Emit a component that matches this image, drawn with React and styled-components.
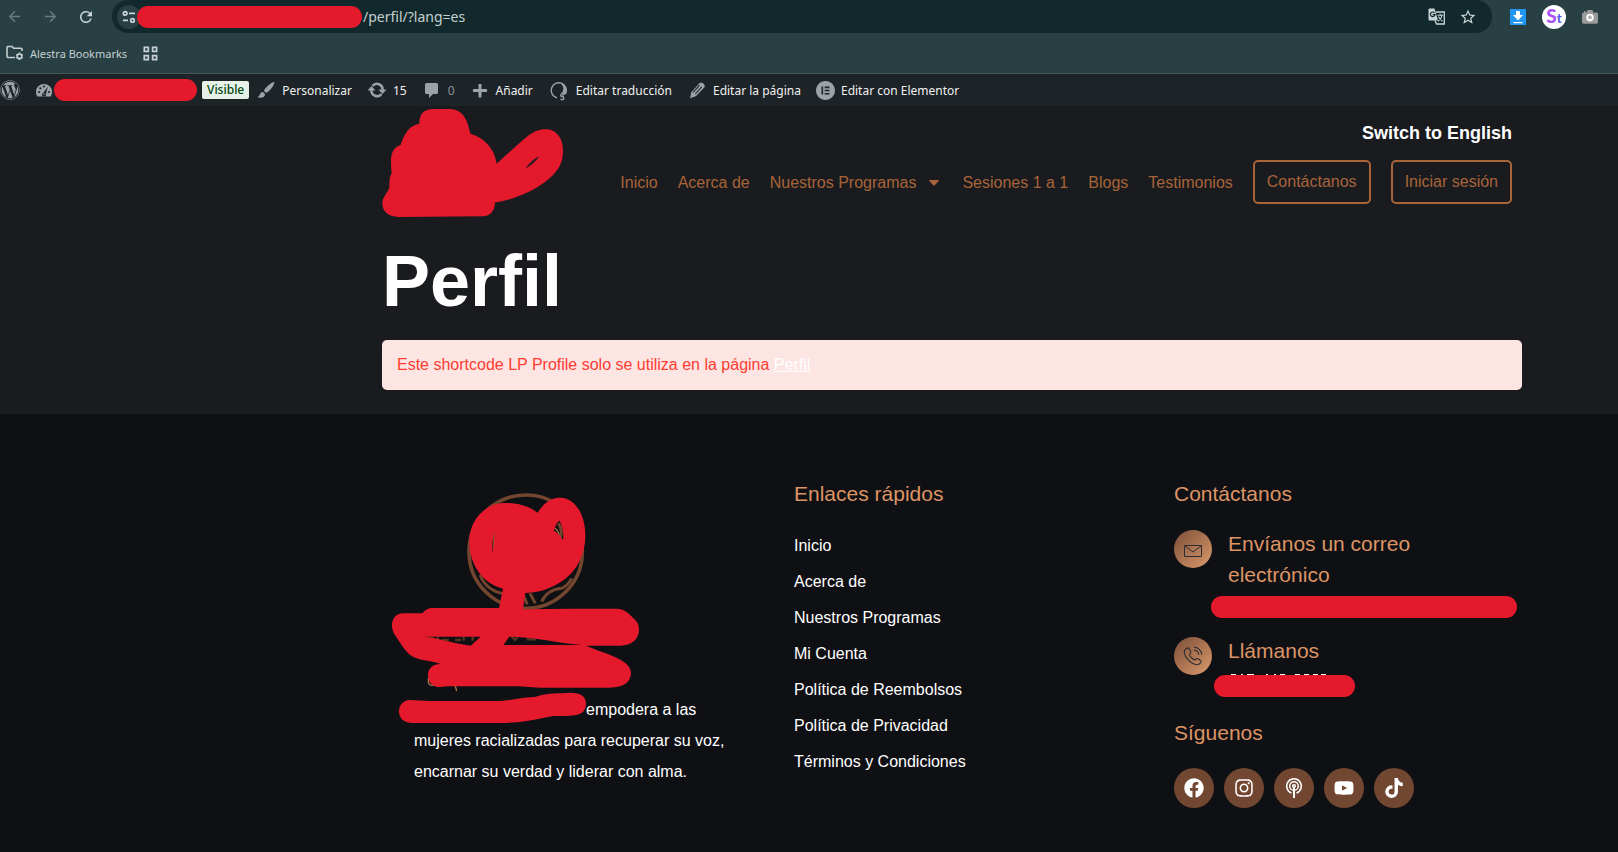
import React from "react";
import styled, { createGlobalStyle } from "styled-components";
import { FaWordpress, FaFacebook, FaInstagram, FaYoutube, FaTiktok } from "react-icons/fa";
import { FaElementor } from "react-icons/fa6";
import { MdStarBorder, MdArrowBack, MdArrowForward, MdRefresh } from "react-icons/md";

const RED = "#e4192c";

const GlobalStyle = createGlobalStyle`
  * { box-sizing: border-box; }
  html { background: #0f1014; }
  body { margin: 0; font-family: "Liberation Sans", Arial, sans-serif; font-size: 16px; color: #fff; }
  h1, h2, h3, p, ul { margin: 0; padding: 0; }
  ul { list-style: none; }
  a { color: inherit; text-decoration: none; }
  svg { display: block; flex: none; }
`;

const Redaction = styled.span`
  display: block;
  flex: none;
  width: ${(p) => p.$width}px;
  height: 22px;
  margin-left: ${(p) => (p.$overlap ? -4 : 0)}px;
  border-radius: 12px;
  background: ${RED};
`;

/* Browser chrome */
const Browser = styled.div`
  background: #283f44;
  border-bottom: 1px solid #46575a;
  font-family: "Noto Sans", "Open Sans", sans-serif;
  color: #c5d0d1;
`;
const Toolbar = styled.div`
  display: flex;
  align-items: center;
  height: 33px;
  padding-right: 16px;
`;
const NavButtons = styled.div`
  display: flex;
  gap: 12px;
  padding-left: 2px;
  margin-right: 14px;
`;
const IconButton = styled.button`
  display: flex;
  align-items: center;
  justify-content: center;
  flex: none;
  width: 24px;
  height: 24px;
  padding: 0;
  border: 0;
  border-radius: 50%;
  background: ${(p) => p.$bg || "transparent"};
  color: ${(p) => (p.$dim ? "#6b7c7f" : "#c9d5d6")};
`;
const AddressBar = styled.div`
  display: flex;
  align-items: center;
  flex: 1;
  height: 33px;
  padding: 0 12px 0 5px;
  border-radius: 16px;
  background: #11292c;
`;
const AddressInput = styled.input`
  flex: 1;
  min-width: 0;
  height: 24px;
  padding: 0 1px;
  border: 0;
  background: transparent;
  color: #c5cfd0;
  font-family: inherit;
  font-size: 14px;
`;
const AddressActions = styled.div`
  display: flex;
  gap: 8px;
`;
const Extensions = styled.div`
  display: flex;
  gap: 12px;
  margin-left: 14px;
`;
const Bookmarks = styled.div`
  display: flex;
  align-items: center;
  gap: 16px;
  height: 40px;
  padding: 0 6px;
`;
const Bookmark = styled.a`
  display: flex;
  align-items: center;
  gap: 6px;
  font-size: 11px;
`;

/* WordPress bar */
const AdminBar = styled.nav`
  display: flex;
  align-items: center;
  gap: 15px;
  height: 32px;
  background: #1d2327;
  color: #f0f0f1;
  font-family: "Noto Sans", "Open Sans", sans-serif;
  font-size: 12px;
  white-space: nowrap;
`;
const AdminItem = styled.a`
  display: flex;
  align-items: center;
  gap: 6px;
  color: ${(p) => (p.$muted ? "#8b9095" : "inherit")};
  svg { color: #9ca2a7; }
`;
const SiteGroup = styled.div`
  display: flex;
  align-items: center;
  gap: 1px;
  margin-right: -8px;
`;
const Badge = styled.span`
  margin-left: 4px;
  padding: 0 5px;
  border-radius: 2px;
  background: #e6f2e8;
  color: #00450c;
  font-weight: 500;
  line-height: 18px;
`;

/* Site */
const Container = styled.div`
  width: calc(100% - 96px);
  max-width: 1140px;
  margin-left: auto;
  margin-right: 96px;
`;
const Main = styled.main`
  padding-bottom: 24px;
  background: #1a1b1f;
`;
const SiteHeader = styled.header`
  display: flex;
  justify-content: space-between;
  padding-right: 10px;
`;
const HeaderRight = styled.div`
  display: flex;
  flex-direction: column;
  align-items: flex-end;
  padding-top: 16px;
`;
const LanguageLink = styled.a`
  font-size: 18px;
  line-height: 22px;
  font-weight: 700;
`;
const Menu = styled.nav`
  display: flex;
  align-items: center;
  gap: 20px;
  margin-top: 16px;
  color: #a86439;
  white-space: nowrap;
`;
const MenuLink = styled.a`
  display: flex;
  align-items: center;
  gap: 13px;
  padding-top: 2px;
  padding-right: ${(p) => (p.$caret ? 3 : 0)}px;
`;
const OutlineLink = styled.a`
  height: 44px;
  padding: 0 12px;
  border: 2px solid #a86439;
  border-radius: 5px;
  line-height: 39px;
`;
const Title = styled.h1`
  margin-top: 22px;
  font-size: 72px;
  line-height: 82px;
`;
const Notice = styled.div`
  margin-top: 18px;
  padding: 0 15px;
  border-radius: 5px;
  background: #fde5e4;
  color: #ff3b30;
  line-height: 50px;
  a { color: #fff; text-decoration: underline; }
`;
const Footer = styled.footer`
  padding: 64px 0 40px;
  background: #0f1014;
`;
const Columns = styled(Container)`
  display: grid;
  grid-template-columns: repeat(3, 1fr);
`;
const Column = styled.section`
  padding: 0 32px;
`;
const BrandColumn = styled.section`
  padding-top: 14px;
`;
const BrandText = styled.p`
  padding: 0 32px;
  line-height: 31px;
`;
const NameGap = styled.span`
  position: relative;
  display: inline-block;
  width: 172px;
  height: 16px;
  svg { position: absolute; left: -15px; top: -7px; }
`;
const Heading = styled.h2`
  color: #dd9465;
  font-size: 21px;
  font-weight: 400;
  line-height: 31px;
`;
const Links = styled.ul`
  display: grid;
  gap: 12px;
  margin-top: 25px;
  line-height: 24px;
`;
const Contacts = styled.div`
  display: grid;
  gap: 17px;
  margin-top: 19px;
`;
const Contact = styled.div`
  display: flex;
  gap: 16px;
`;
const ContactBody = styled.div`
  flex: 1;
  min-width: 0;
`;
const RoundIcon = styled.span`
  display: flex;
  align-items: center;
  justify-content: center;
  flex: none;
  width: 38px;
  height: 38px;
  margin-top: 2px;
  border-radius: 50%;
  background: linear-gradient(135deg, #7b4e38, #dc9a6b);
  color: #2b2d33;
`;
const HiddenMail = styled.div`
  margin: 6px -32px 0 -17px;
`;
const HiddenPhone = styled.div`
  margin: 8px 0 0 -14px;
  svg { margin-left: 15px; }
`;
const Follow = styled.div`
  margin-top: 20px;
`;
const Socials = styled.div`
  display: flex;
  gap: 10px;
  margin-top: 20px;
`;
const Social = styled.a`
  display: flex;
  align-items: center;
  justify-content: center;
  width: 40px;
  height: 40px;
  border-radius: 50%;
  background: #714731;
`;

const TuneIcon = () => (
  <svg width="14" height="14" viewBox="0 0 14 14" fill="none" stroke="currentColor" strokeWidth="1.7">
    <circle cx="3.2" cy="3.4" r="1.8" /><path d="M7 3.4h6M1 10.4h5" /><circle cx="10.5" cy="10.4" r="1.8" />
  </svg>
);
const TranslateIcon = () => (
  <svg width="17" height="17" viewBox="0 0 17 17" fill="none" stroke="currentColor">
    <path d="M8 4h8.300v12H8.500L7 12.500" strokeWidth="1.300" />
    <path d="M9.500 7.200h5.500M12.200 5.700v1.500M14 7.500c-.5 2.500-2 4.500-4 5.700M10.500 8.500c.8 2 2.200 3.500 4 4.700" strokeWidth="1.100" />
    <path fill="currentColor" stroke="none" d="M1.500.500h5L10 12.500H1.500Q.500 12.500.500 11.500v-10Q.500.500 1.500.500z" />
    <path d="M6.500 4.800A2.300 2.300 0 1 0 7 6.700H4.700" stroke="#11292c" strokeWidth="1.200" />
  </svg>
);
const FolderGear = () => (
  <svg width="18" height="16" viewBox="0 0 18 16" fill="none" stroke="currentColor" strokeWidth="1.6">
    <path d="M9 12.5H2a1 1 0 0 1-1-1v-9a1 1 0 0 1 1-1h4l1.6 1.8H15a1 1 0 0 1 1 1V6" />
    <circle cx="13.5" cy="11.3" r="2.3" />
    <path d="M13.5 7.6v1.6M13.5 13.4V15M10.3 9.5l1.4.8M15.3 12.4l1.4.8M10.3 13.2l1.4-.8M15.3 10.3l1.4-.8" strokeWidth="1.5" />
  </svg>
);
const GridIcon = () => (
  <svg width="15" height="15" viewBox="0 0 15 15" fill="none" stroke="currentColor" strokeWidth="1.7">
    <path d="M1.3 1.3h4v4h-4zM9.6 1.3h4v4h-4zM1.3 9.6h4v4h-4zM9.6 9.6h4v4h-4z" />
  </svg>
);
const DownloadIcon = () => (
  <svg width="16" height="16" viewBox="0 0 16 16">
    <path fill="#2196f3" d="M0 0h16v16H0z" /><path fill="#fff" d="M6 2h4v4h3l-5 5.5L3 6h3zM3.5 13h9v1.3h-9z" />
  </svg>
);
const Monogram = styled.span`
  display: flex;
  align-items: baseline;
  font-family: Lato, sans-serif;
  font-weight: 900;
  font-size: 19px;
  line-height: 22px;
  color: #a855f7;
  small { font-size: 13px; color: #5b5bf0; }
`;
const CameraIcon = () => (
  <svg width="16" height="14" viewBox="0 0 16 14">
    <path fill="#9b9b9b" d="M2 1h1.5v1.5H5V1.2Q5 0 6.2 0h3.6Q11 0 11 1.2v1.3h3.2Q16 2.5 16 4v8q0 1.8-1.8 1.8H1.8Q0 13.8 0 12V4q0-1.5 2-1.5z" />
    <circle cx="8" cy="7.6" r="2.9" fill="#b5b5b5" stroke="#fff" strokeWidth="1.8" />
  </svg>
);
const GaugeIcon = () => (
  <svg width="18" height="18" viewBox="0 0 18 18">
    <path fill="currentColor" d="M1 10.5a8 7.500 0 0 1 16 0c0 2-.5 3.600-1.200 5H2.200C1.500 14 1 12.500 1 10.5z" />
    <g fill="#1d2327"><circle cx="4" cy="11" r="1.1" /><circle cx="5.3" cy="7.3" r="1.1" /><circle cx="9" cy="5.5" r="1.1" /><circle cx="14" cy="11" r="1.1" /><path d="M12.8 5.8 10.9 13a2 2 0 1 1-2.600-1.300z" /></g>
    <circle cx="9" cy="13" r=".8" fill="currentColor" />
  </svg>
);
const BrushIcon = () => (
  <svg width="20" height="20" viewBox="0 0 20 20" fill="currentColor">
    <path d="M18.2 2.2c.8.7-1.500 5-4.700 8.300-1.500 1.600-2.700 2.300-3.700 2.300L8 11c0-1 .9-2.300 2.500-3.800C13.700 4 17.500 1.600 18.200 2.200zM7 12l2 2c.2 2-1.500 3.800-4.500 3.800-1.300 0-2.400-.3-3-.7 2.700-1 2-4.600 5.500-5.100z" />
  </svg>
);
const UpdateIcon = () => (
  <svg width="20" height="20" viewBox="0 0 20 20" fill="none" stroke="currentColor" strokeWidth="2.6">
    <path d="M5.500 6A5.600 5.600 0 0 1 15.500 10M14.500 14A5.600 5.600 0 0 1 4.500 10" />
    <path fill="currentColor" stroke="none" d="M11.500 9.500h8L15.500 14zM.5 10.500h8L4.500 6z" />
  </svg>
);
const CommentIcon = () => (
  <svg width="20" height="20" viewBox="0 0 20 20" fill="currentColor">
    <path d="M4.500 3h10q1.500 0 1.500 1.500v8q0 1.500-1.500 1.500H11L7 18v-4H4.500Q3 14 3 12.500v-8Q3 3 4.500 3z" />
  </svg>
);
const PlusIcon = () => (
  <svg width="20" height="20" viewBox="0 0 20 20" fill="currentColor"><path d="M8.500 4h3v5H17v3h-5.500v5.500h-3V12H3V9h5.500z" /></svg>
);
const TranslateRing = () => (
  <svg width="22" height="22" viewBox="0 0 22 22" fill="none" stroke="currentColor" strokeWidth="1.4">
    <path d="M9 18.800A7.600 7.600 0 1 1 17.500 15" />
    <path d="M14.500 5c2.500 3.500 2 7-.8 9.800-1.500 1.500-1.200 2.700.3 2.700 2.300 0 2.500 3 .3 3.200-1 0-1.400-.5-1.500-1" />
    <path fill="currentColor" stroke="none" d="M13 4.500c4 1 6.500 5 5.200 9-.7 2-2.200 3-4.500 3.200 2.800-3.700 3.300-7.700-.7-12.200z" />
  </svg>
);
const PencilIcon = () => (
  <svg width="20" height="20" viewBox="0 0 20 20">
    <path fill="currentColor" d="M12.500 3.200q1.500-1.500 3.300 0l1.500 1.500q1.200 1.500 0 2.800l-8.500 8.800L3 18.200l1.300-6z" />
    <path fill="none" stroke="#1d2327" strokeWidth="1.1" d="M6 12.500l6.500-7.200M8.300 14l6.400-7.100" />
  </svg>
);
const MailIcon = () => (
  <svg width="18" height="18" viewBox="0 0 18 18" fill="none" stroke="currentColor"><path d="M.5 5.500h17v11H.5zM1 6l8 6 8-6" /></svg>
);
const PhoneIcon = () => (
  <svg width="20" height="20" viewBox="0 0 20 20" fill="none" stroke="currentColor" strokeWidth="1.1">
    <path d="M3.500 2.200C2 3.300 1 4.500 1.200 6.500 2 12 8 18 13.500 18.800c2 .2 3-.6 4.200-2.200.7-1 .4-1.700-.5-2.400l-2.200-1.500c-1.500-.8-2 .8-3 1.200-1.500.4-5.700-3.700-5.500-5.300.3-1.200 2-1.700 1.200-3.200L6.200 2.900c-.7-1-1.600-1.400-2.700-.7zM11 1c4 .3 7.500 3.500 7.900 7.800M11 4c2.500.3 4.500 2.200 4.900 4.800" />
  </svg>
);
const PodcastIcon = () => (
  <svg width="20" height="20" viewBox="0 0 20 20" fill="none" stroke="#fff" strokeWidth="1.5">
    <circle cx="10" cy="8" r="1.3" /><circle cx="10" cy="8" r="4.3" /><path d="M7.500 15a7.300 7.300 0 1 1 5 0" /><path d="M10 9v11" strokeWidth="2" />
  </svg>
);
const HeaderLogo = () => (
  <svg width="182" height="112" viewBox="36 18 546 336">
    <path fill={RED} d="M148 66C150 38 165 27 190 27h50c35 0 52 28 61 74 40 11 72 42 79 90 30-26 60-56 90-80 22-18 40-24 60-23 30 2 49 27 49 62 1 45-20 70-55 97-50 36-109 56-149 60 0 24-13 42-37 42l-253 2C55 350 37 335 37 310c0-18 13-28 21-46 1-18-1-30 7-44-4-40-6-75 27-85 9-31 26-60 56-64z" />
    <path fill="#2a1a20" d="M466 206c14-20 27-30 42-38-9 16-24 28-42 38z" />
  </svg>
);
const FooterLogo = () => (
  <svg width="380" height="202" viewBox="6 36 1140 606">
    <circle cx="437" cy="215" r="170" fill="none" stroke="#71452e" strokeWidth="11" />
    <g fill="none" stroke="#71452e" strokeWidth="9">
      <path d="M300 285q20 50 80 58M485 365q15-35 60-40 20-10 30-30M430 345l12 28M450 340l16 30M535 130q15 20 5 45" />
      <path stroke="#aa7548" d="M525 145q12 10 12 22M342 155v60M145 595q-2 25 15 20M225 615l5 18" strokeWidth="4" />
    </g>
    <path fill="none" stroke="#54351f" strokeWidth="7" d="M135 473h18M157 470v12M173 470v12M186 480h20M225 480h18M251 470v12M278 470v12M395 470l10 10 8-10M440 478h28" />
    <path fill={RED} fillRule="evenodd" d="M375 69c45 0 75 12 98 29 17-27 37-44 65-45 45-2 77 48 78 110 1 30-6 55-15 75-23 58-95 101-165 101l-7 49 150-2h130c20 0 33 9 50 27 14 12 18 22 18 37 0 27-23 47-55 47H618c60 25 135 42 135 81 0 30-25 45-70 45H480l-65-4H198c-30 8-54-5-54-35 0-18 14-32 38-32-40-15-68-7-95-30-15-14-25-31-38-51-25-31-12-71 20-71h58c10-12 18-16 30-16h200l12-58c-60-15-101-72-101-140-1-66 48-117 107-117zM130 470c40 2 80 18 142 27l30-27zM388 470l-18 25h235c-80-7-125-20-190-24zM345 155c-9 20-8 42-7 63 5-17 3-40 7-63zM538 122c-8 7-12 15-16 30 10 5 18 15 27 28 3-22-2-44-11-58z" />
  </svg>
);

const quickLinks = ["Inicio", "Acerca de", "Nuestros Programas", "Mi Cuenta", "Política de Reembolsos", "Política de Privacidad", "Términos y Condiciones"];
const socials = [
  ["Facebook", <FaFacebook size={20} />],
  ["Instagram", <FaInstagram size={20} />],
  ["Podcast", <PodcastIcon />],
  ["YouTube", <FaYoutube size={20} />],
  ["TikTok", <FaTiktok size={20} />],
];

export default function App() {
  return (
    <>
      <GlobalStyle />
      <Browser>
        <Toolbar>
          <NavButtons>
            <IconButton $dim aria-label="Atrás"><MdArrowBack size={17} /></IconButton>
            <IconButton $dim aria-label="Adelante"><MdArrowForward size={17} /></IconButton>
            <IconButton aria-label="Recargar"><MdRefresh size={18} /></IconButton>
          </NavButtons>
          <AddressBar>
            <IconButton $bg="#283f44" aria-label="Información del sitio"><TuneIcon /></IconButton>
            <Redaction $width={225} $overlap />
            <AddressInput aria-label="Dirección" defaultValue="/perfil/?lang=es" />
            <AddressActions>
              <IconButton aria-label="Traducir"><TranslateIcon /></IconButton>
              <IconButton aria-label="Favorito"><MdStarBorder size={18} /></IconButton>
            </AddressActions>
          </AddressBar>
          <Extensions>
            <IconButton aria-label="Descargas"><DownloadIcon /></IconButton>
            <IconButton $bg="#fff" aria-label="St"><Monogram>S<small>t</small></Monogram></IconButton>
            <IconButton aria-label="Captura"><CameraIcon /></IconButton>
          </Extensions>
        </Toolbar>
        <Bookmarks>
          <Bookmark href="#"><FolderGear />Alestra Bookmarks</Bookmark>
          <Bookmark href="#" aria-label="Aplicaciones"><GridIcon /></Bookmark>
        </Bookmarks>
      </Browser>
      <AdminBar>
        <AdminItem href="#" aria-label="WordPress"><FaWordpress size={20} /></AdminItem>
        <SiteGroup>
          <AdminItem href="#" aria-label="Sitio"><GaugeIcon /></AdminItem>
          <Redaction $width={143} />
          <Badge>Visible</Badge>
        </SiteGroup>
        <AdminItem href="#"><BrushIcon />Personalizar</AdminItem>
        <AdminItem href="#"><UpdateIcon />15</AdminItem>
        <AdminItem href="#" $muted><CommentIcon />0</AdminItem>
        <AdminItem href="#"><PlusIcon />Añadir</AdminItem>
        <AdminItem href="#"><TranslateRing />Editar traducción</AdminItem>
        <AdminItem href="#"><PencilIcon />Editar la página</AdminItem>
        <AdminItem href="#"><FaElementor size={19} />Editar con Elementor</AdminItem>
      </AdminBar>
      <Main>
        <Container>
          <SiteHeader>
            <HeaderLogo />
            <HeaderRight>
              <LanguageLink href="#">Switch to English</LanguageLink>
              <Menu>
                <MenuLink href="#">Inicio</MenuLink>
                <MenuLink href="#">Acerca de</MenuLink>
                <MenuLink href="#" $caret>
                  Nuestros Programas
                  <svg width="10" height="6" viewBox="0 0 10 6"><path fill="currentColor" d="M0 .5Q0 0 .5 0h9q.5 0 .5.5L5.500 5.500q-.5.5-1 0z" /></svg>
                </MenuLink>
                <MenuLink href="#">Sesiones 1 a 1</MenuLink>
                <MenuLink href="#">Blogs</MenuLink>
                <MenuLink href="#">Testimonios</MenuLink>
                <OutlineLink href="#">Contáctanos</OutlineLink>
                <OutlineLink href="#">Iniciar sesión</OutlineLink>
              </Menu>
            </HeaderRight>
          </SiteHeader>
          <Title>Perfil</Title>
          <Notice>Este shortcode LP Profile solo se utiliza en la página <a href="#">Perfil</a></Notice>
        </Container>
      </Main>
      <Footer>
        <Columns>
          <BrandColumn>
            <FooterLogo />
            <BrandText>
              <NameGap>
                <svg width="188" height="32" viewBox="58 640 564 96"><path fill={RED} d="M90 664c20 0 40 3 60 3h210c40-2 65-11 105-12 30-9 50-11 85-11 45-7 70 5 69 32-1 27-20 35-50 35-35 2-45-2-75 6-40 8-80 16-130 16H100c-26 0-42-12-42-35 0-20 14-33 32-34z" /></svg>
              </NameGap>
              empodera a las mujeres racializadas para recuperar su voz, encarnar su verdad y liderar con alma.
            </BrandText>
          </BrandColumn>
          <Column>
            <Heading>Enlaces rápidos</Heading>
            <Links>{quickLinks.map((t) => <li key={t}><a href="#">{t}</a></li>)}</Links>
          </Column>
          <Column>
            <Heading>Contáctanos</Heading>
            <Contacts>
              <Contact>
                <RoundIcon><MailIcon /></RoundIcon>
                <ContactBody>
                  <Heading as="h3">Envíanos un correo electrónico</Heading>
                  <HiddenMail><Redaction $width={306} /></HiddenMail>
                </ContactBody>
              </Contact>
              <Contact>
                <RoundIcon><PhoneIcon /></RoundIcon>
                <ContactBody>
                  <Heading as="h3">Llámanos</Heading>
                  <HiddenPhone>
                    <svg width="100" height="1" viewBox="0 0 100 1" stroke="#fff" strokeWidth="2"><path d="M2 .5h5M12 .5h2M18 .5h7M37 .5h2M45 .5h2M51 .5h5M66 .5h5M75 .5h5M84 .5h5M92 .5h5" /></svg>
                    <Redaction $width={141} />
                  </HiddenPhone>
                </ContactBody>
              </Contact>
            </Contacts>
            <Follow>
              <Heading>Síguenos</Heading>
              <Socials>{socials.map(([name, icon]) => <Social key={name} href="#" aria-label={name}>{icon}</Social>)}</Socials>
            </Follow>
          </Column>
        </Columns>
      </Footer>
    </>
  );
}
